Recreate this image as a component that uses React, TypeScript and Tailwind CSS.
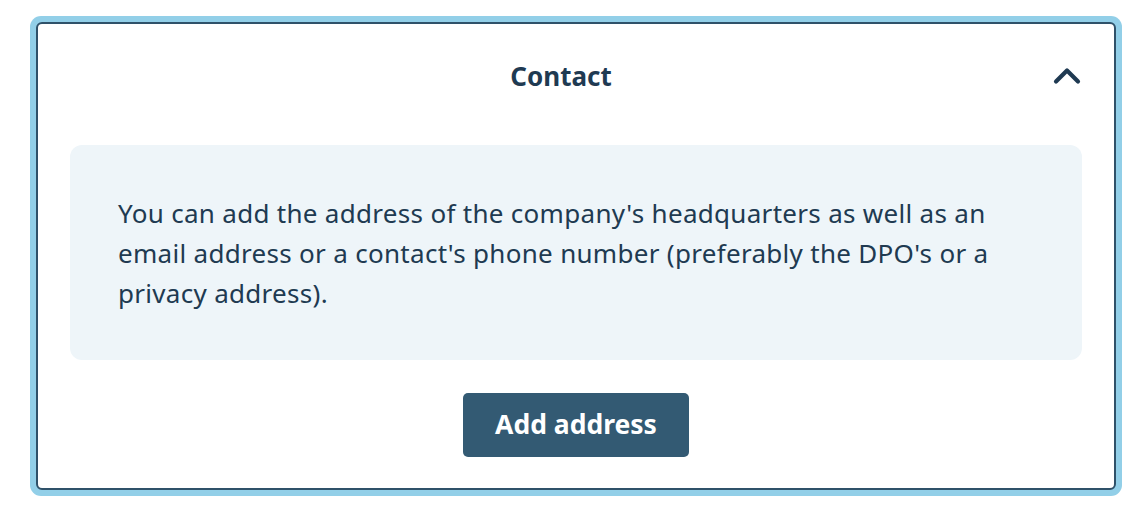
import React from "react";

export default function App() {
  return (
    <div
      className="w-[1140px] h-[528px] bg-white pt-[16px] pl-[30px]"
      style={{ fontFamily: '"Noto Sans", "Open Sans", sans-serif' }}
    >
      <div className="w-[1092px] h-[480px] bg-[#92cfe8] p-[6px] rounded-[11px]">
        <div className="w-full h-full bg-white border-2 border-[#2f5169] rounded-[6px] flex flex-col items-center px-[32px]">
          <div className="w-full h-[121px] flex items-start pt-[35px]">
            <h2 className="flex-1 text-center text-[26px] leading-[34px] font-bold text-[#1f3a52]">Contact</h2>
            <div className="w-[30px] flex justify-center pt-[7px]">
              <svg width="30" height="20" viewBox="0 0 30 20" fill="none">
                <path
                  d="M4 15.5 L15 4.5 L26 15.5"
                  stroke="#1f3a52"
                  strokeWidth="4.2"
                  strokeLinecap="round"
                  strokeLinejoin="round"
                />
              </svg>
            </div>
          </div>
          <div className="w-full h-[215px] bg-[#eef5f9] rounded-[12px] px-[48px] flex items-center">
            <p className="text-[26px] leading-[40px] tracking-[0.3px] text-[#203a51]">
              You can add the address of the company's headquarters as well as an email address or a contact's phone number (preferably the DPO's or a privacy address).
            </p>
          </div>
          <button className="mt-[33px] w-[226px] h-[64px] bg-[#335a73] rounded-[5px] text-white text-[26.5px] font-bold">
            Add address
          </button>
        </div>
      </div>
    </div>
  );
}
